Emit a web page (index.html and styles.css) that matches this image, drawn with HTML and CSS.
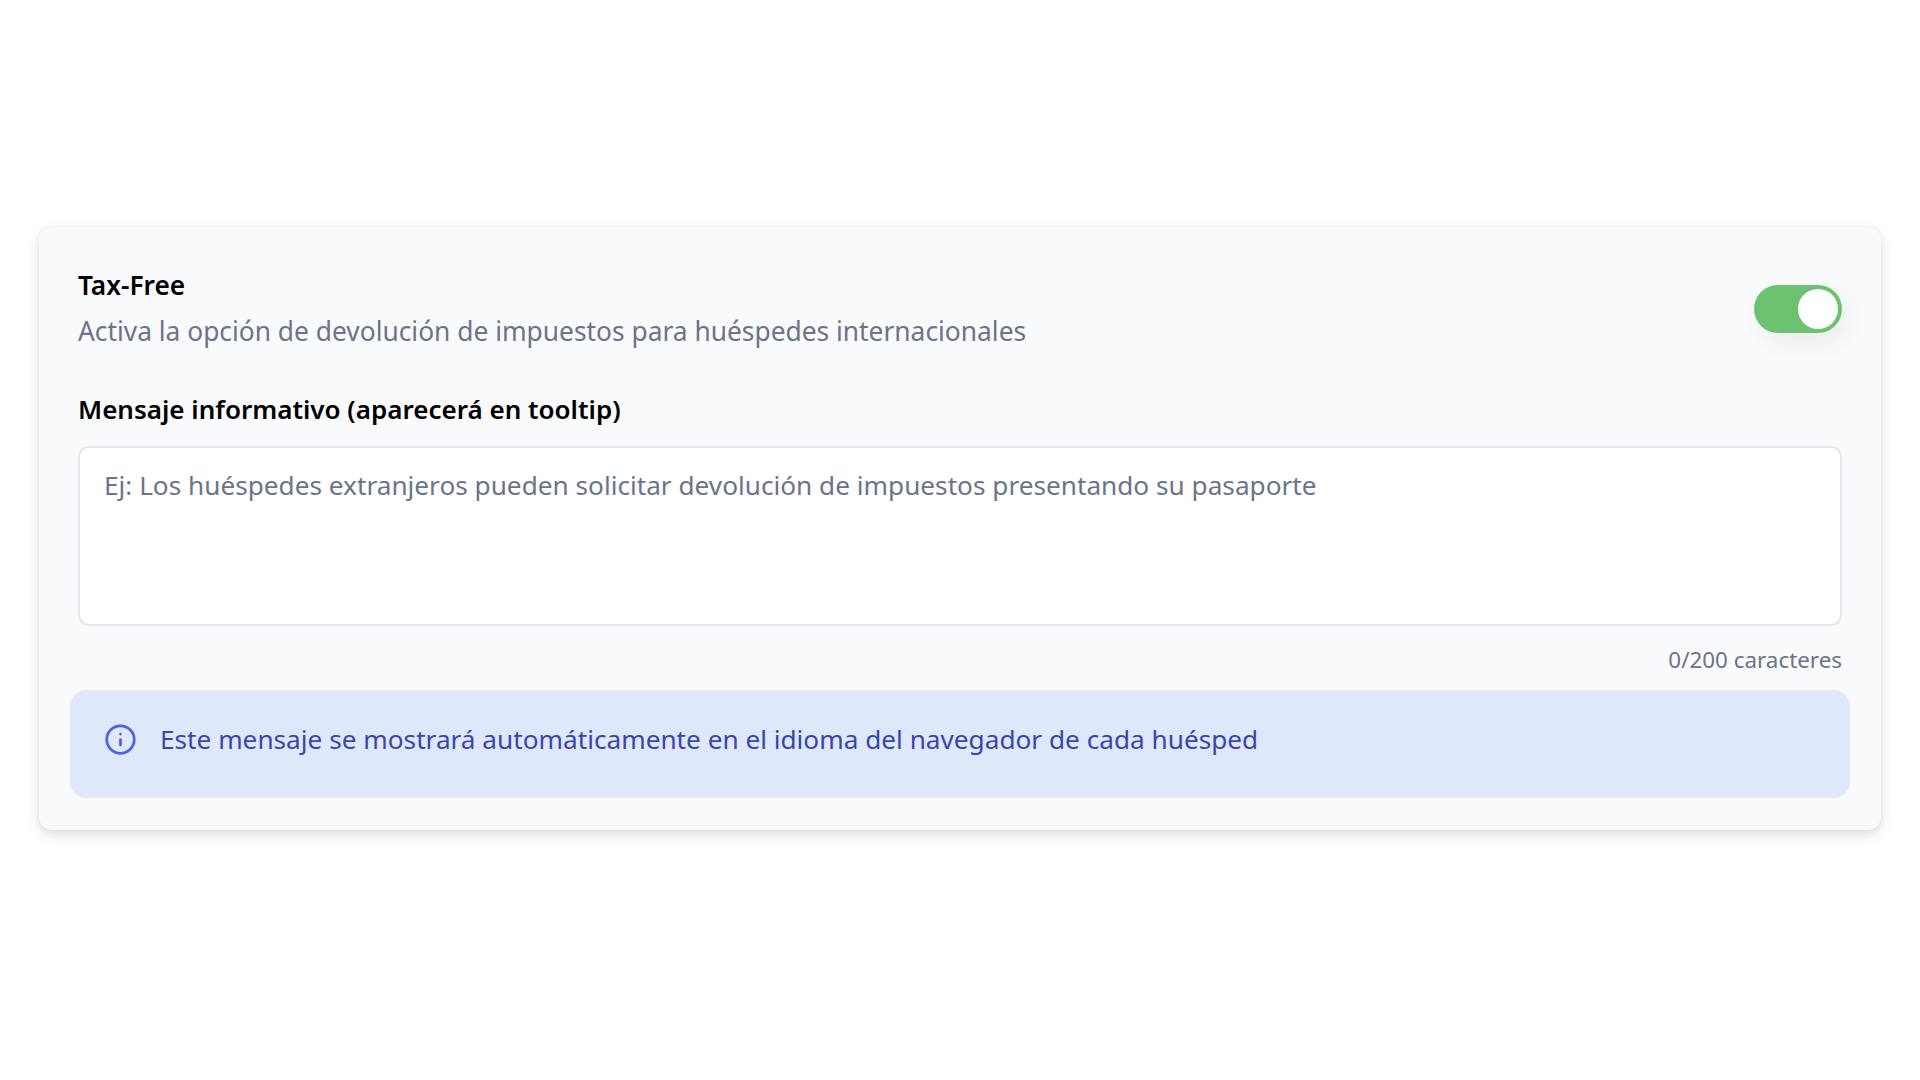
FILE: index.html
```html
<!DOCTYPE html>
<html lang="es">
<head>
<meta charset="utf-8">
<title>Tax-Free</title>
<link rel="stylesheet" href="styles.css">
</head>
<body>
<section class="card">
  <div class="head">
    <div class="head-text">
      <div class="title">Tax-Free</div>
      <div class="desc">Activa la opción de devolución de impuestos para huéspedes internacionales</div>
    </div>
    <div class="toggle"><span class="knob"></span></div>
  </div>
  <label class="label" for="msg">Mensaje informativo (aparecerá en tooltip)</label>
  <textarea class="input" id="msg" placeholder="Ej: Los huéspedes extranjeros pueden solicitar devolución de impuestos presentando su pasaporte"></textarea>
  <div class="count">0/200 caracteres</div>
  <div class="alert">
    <svg class="icon" viewBox="0 0 24 24" fill="none" stroke="#4f63e0" stroke-width="2" stroke-linecap="round"><circle cx="12" cy="12" r="10"/><path d="M12 16v-4"/><path d="M12 8h.01"/></svg>
    <span class="alert-text">Este mensaje se mostrará automáticamente en el idioma del navegador de cada huésped</span>
  </div>
</section>
</body>
</html>
```
FILE: styles.css
```css
* { box-sizing: border-box; }
html, body { margin: 0; background: #fff; }
body { min-height: 100vh; padding: 227px 39px 0; font-family: "Noto Sans", sans-serif; }
.card {
  width: 1842px;
  height: 603px;
  padding: 34px 39px 0;
  background: #f9fafc;
  border-radius: 13px;
  box-shadow: 0 5px 14px rgba(0,0,0,.13), 0 0 4px rgba(0,0,0,.06);
  display: flex;
  flex-direction: column;
}
.head { display: flex; justify-content: space-between; align-items: center; height: 96px; }
.head-text { padding-bottom: 2px; }
.title { font-size: 26.3px; font-weight: 600; line-height: 36px; color: #000; }
.desc { font-size: 26.35px; line-height: 38px; margin-top: 9px; color: #6b7488; }
.toggle {
  width: 88px; height: 48px; border-radius: 24px; background: #6cc270;
  display: flex; align-items: center; justify-content: flex-end; padding: 0 4px;
  box-shadow: 6px 12px 24px rgba(0,0,0,.05);
}
.knob { width: 40px; height: 40px; border-radius: 50%; background: #fff; }
.label { display: block; margin-top: 33px; font-size: 26px; font-weight: 600; line-height: 38px; color: #000; }
.input {
  display: block; width: 100%; height: 180px; margin-top: 18px; padding: 18px 24px;
  border: 2px solid #e5e8f0; border-radius: 11px; background: #fff; resize: none; outline: 0;
  font: 26.2px/38px "Noto Sans", sans-serif; color: #6b7488;
}
.input::placeholder { color: #6b7488; opacity: 1; }
.count { margin-top: 18px; text-align: right; font-size: 22.4px; line-height: 32px; color: #6b7488; }
.alert {
  margin: 14px -8px 0; height: 108px; padding: 0 34px 10px; border-radius: 16px; background: #dfe8fa;
  display: flex; align-items: center; gap: 23px;
}
.icon { width: 33px; height: 33px; flex: none; }
.alert-text { font-size: 26.2px; line-height: 38px; color: #3a45ae; }
```
